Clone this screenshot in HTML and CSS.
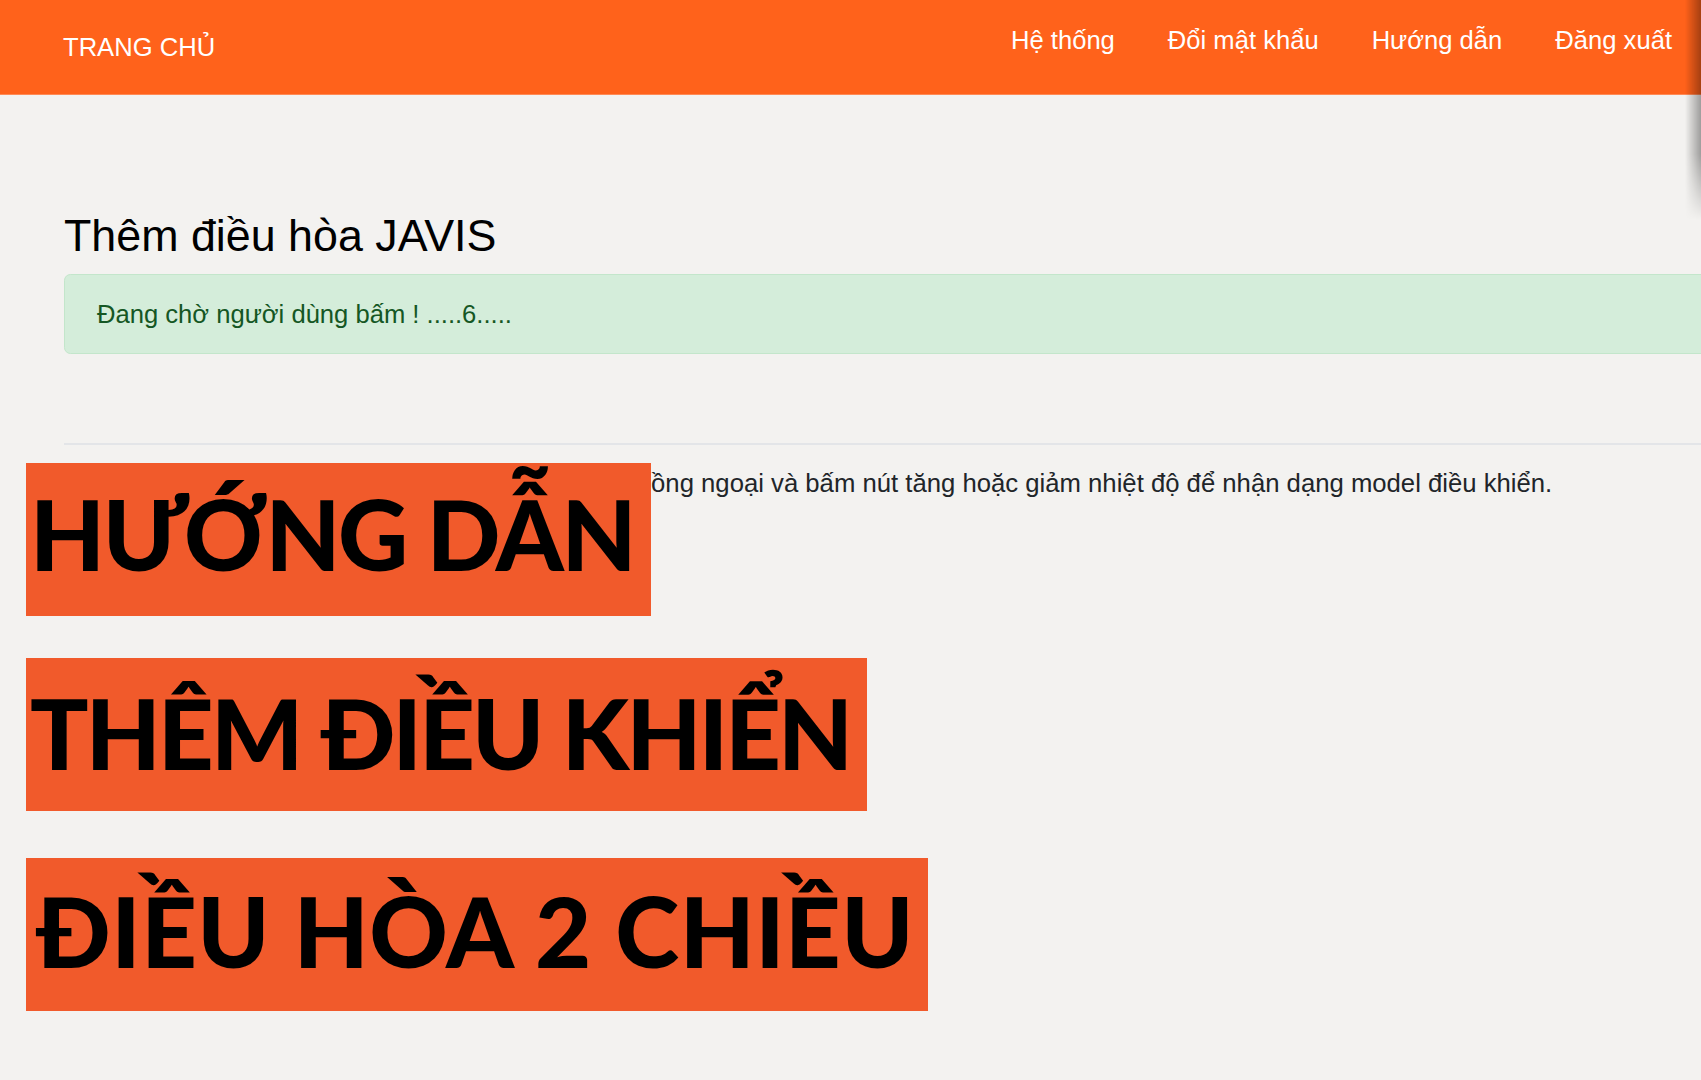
FILE: index.html
```html
<!DOCTYPE html>
<html lang="vi">
<head>
<meta charset="utf-8">
<title>Thêm điều hòa JAVIS</title>
<link rel="stylesheet" href="styles.css">
</head>
<body>
<header class="navbar">
  <a class="brand" href="#">TRANG CHỦ</a>
  <nav class="nav">
    <a class="nav-link" href="#">Hệ thống</a>
    <a class="nav-link" href="#">Đổi mật khẩu</a>
    <a class="nav-link" href="#">Hướng dẫn</a>
    <a class="nav-link" href="#">Đăng xuất</a>
  </nav>
</header>
<main class="content">
  <h3 class="title">Thêm điều hòa JAVIS</h3>
  <div class="alert">Đang chờ người dùng bấm ! .....6.....</div>
  <hr class="divider">
  <p class="guide">Vui lòng hướng điều khiển điều hòa vào mắt nhận hồng ngoại và bấm nút tăng hoặc giảm nhiệt độ để nhận dạng model điều khiển.</p>
</main>
<div class="banners">
  <div class="banner banner-1">HƯỚNG DẪN</div>
  <div class="banner banner-2">THÊM ĐIỀU KHIỂN</div>
  <div class="banner banner-3">ĐIỀU HÒA 2 CHIỀU</div>
</div>
<div class="edge-shadow"></div>
</body>
</html>
```

FILE: styles.css
```css
html, body {
  margin: 0;
  padding: 0;
  width: 1701px;
  height: 1080px;
  overflow: hidden;
}
body {
  position: relative;
  background: #f3f2f0;
  font-family: "Liberation Sans", Arial, sans-serif;
  font-size: 25.6px;
  line-height: 1.5;
  color: #212529;
}
.navbar {
  height: 95px;
  box-sizing: border-box;
  background: #ff621b;
  border-bottom: 1px solid #ff8a55;
  display: flex;
  align-items: center;
  padding: 0 29px 0 63px;
}
.brand {
  color: #fff;
  text-decoration: none;
  font-size: 25.6px;
  line-height: 38.4px;
  margin-top: 1px;
}
.nav {
  margin-left: auto;
  align-self: flex-start;
  margin-top: 21px;
  display: flex;
  gap: 53px;
}
.nav-link {
  color: #fff;
  text-decoration: none;
  line-height: 38.4px;
}
.content {
  padding: 114px 0 0 64px;
}
.title {
  margin: 0 0 11px;
  font-size: 44.8px;
  font-weight: 400;
  line-height: 1.2;
  color: #000;
}
.alert {
  margin-right: -20px;
  padding: 19.8px 32px 20px;
  border: 1.6px solid #c3e6cb;
  border-radius: 6.4px;
  background: #d4edda;
  color: #155724;
}
.divider {
  margin: 89px 0 0;
  border: 0;
  border-top: 2px solid #e3e5e8;
}
.guide {
  margin: 19px 0 0;
  font-size: 25.7px;
  text-indent: -3px;
  color: #212529;
}
.banners {
  position: absolute;
  left: 26px;
  top: 463px;
  display: flex;
  flex-direction: column;
  align-items: flex-start;
}
.banner {
  height: 153px;
  box-sizing: border-box;
  padding: 12px 16px 0 4px;
  background: #f15a2b;
  color: #000;
  font-family: "Lato", "Liberation Sans", sans-serif;
  font-weight: 900;
  font-size: 97px;
  line-height: normal;
  white-space: nowrap;
}
.banner-1 {
  letter-spacing: -2.4px;
  padding-right: 17px;
}
.banner-2 {
  margin-top: 42px;
  padding-top: 16px;
  padding-right: 17px;
  letter-spacing: -2.8px;
}
.banner-3 {
  margin-top: 47px;
  padding-top: 14px;
  padding-left: 10px;
  padding-right: 14px;
  letter-spacing: 0.5px;
}
.edge-shadow {
  position: absolute;
  top: 0;
  right: 0;
  width: 16px;
  height: 220px;
  background: linear-gradient(to right, rgba(0,0,0,0), rgba(0,0,0,0.35));
  -webkit-mask-image: linear-gradient(to bottom, #000 70%, transparent);
  mask-image: linear-gradient(to bottom, #000 70%, transparent);
}
```
